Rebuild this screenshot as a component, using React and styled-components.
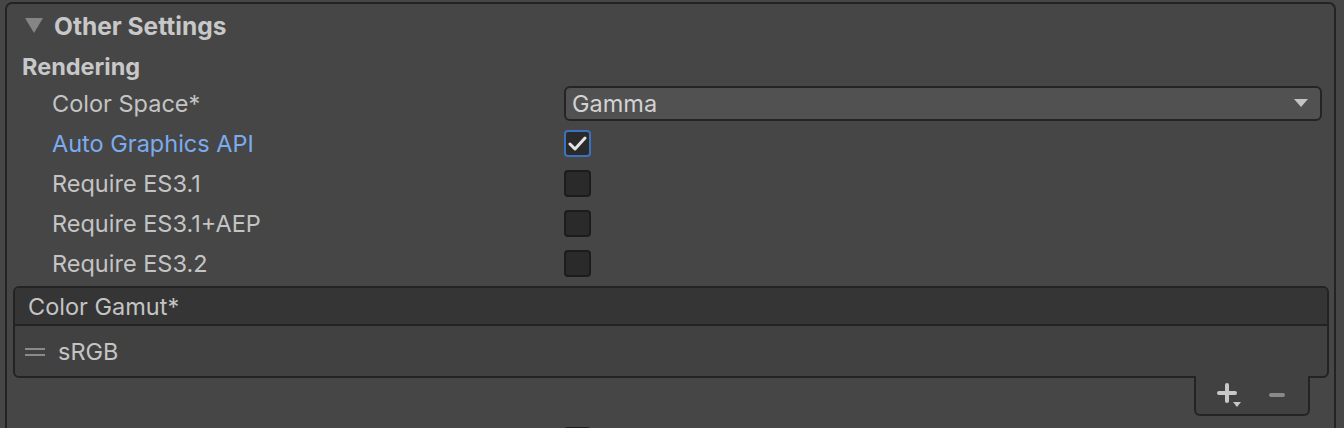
import styled, { createGlobalStyle } from "styled-components";

const GlobalStyle = createGlobalStyle`
  html, body {
    margin: 0;
    padding: 0;
    background: #464646;
    overflow: hidden;
  }
  body {
    font-family: Inter, "Noto Sans", sans-serif;
    color: #c4c4c4;
  }
`;

const Page = styled.div`
  width: 1344px;
  height: 428px;
  padding: 2px 8px 0 5px;
  box-sizing: border-box;
  overflow: hidden;
`;

const Frame = styled.div`
  border: 2px solid #232323;
  border-bottom: none;
  border-radius: 7px 7px 0 0;
  height: 600px;
  box-sizing: border-box;
`;

const FoldoutHeader = styled.div`
  display: flex;
  align-items: center;
  height: 43px;
  padding-left: 18px;
  gap: 11px;
  font-size: 24.5px;
  font-weight: 700;
  color: #c8c8c8;
`;

const SectionTitle = styled.div`
  display: flex;
  align-items: center;
  height: 36px;
  padding: 2px 0 0 15px;
  box-sizing: border-box;
  font-size: 23.5px;
  font-weight: 700;
  color: #c8c8c8;
`;

const Row = styled.div`
  display: flex;
  align-items: center;
  height: 40px;
  padding-right: 12px;
`;

const Label = styled.div`
  width: 557px;
  flex: none;
  padding-left: 45px;
  box-sizing: border-box;
  font-size: 23.5px;
  color: ${(p) => (p.$modified ? "#7cabf0" : "#c4c4c4")};
  white-space: nowrap;
`;

const Control = styled.div`
  flex: 1;
  display: flex;
  align-items: center;
`;

const Dropdown = styled.div`
  flex: 1;
  height: 35px;
  box-sizing: border-box;
  display: flex;
  align-items: center;
  justify-content: space-between;
  padding: 0 12px 0 6px;
  background: #515151;
  border: 2px solid #242424;
  border-radius: 6px;
  font-size: 23.5px;
  color: #d2d2d2;
`;

const Checkbox = styled.div`
  width: 27px;
  height: 27px;
  box-sizing: border-box;
  border-radius: 4px;
  background: #2a2a2a;
  border: 2px solid ${(p) => (p.$checked ? "#3a72c0" : "#1c1c1c")};
  display: flex;
  align-items: center;
  justify-content: center;
`;

const List = styled.div`
  margin: 3px 5px 0 6px;
  display: flex;
  flex-direction: column;
  align-items: flex-end;
`;

const ListBox = styled.div`
  align-self: stretch;
  border: 2px solid #232323;
  border-radius: 6px;
  overflow: hidden;
  background: #414141;
`;

const ListHeader = styled.div`
  height: 36px;
  display: flex;
  align-items: center;
  padding-left: 13px;
  background: #353535;
  border-bottom: 2px solid #232323;
  font-size: 23.5px;
  color: #c4c4c4;
`;

const ListItem = styled.div`
  height: 50px;
  display: flex;
  align-items: center;
  padding-left: 10px;
  gap: 13px;
  font-size: 23.5px;
  color: #c4c4c4;
`;

const Handle = styled.div`
  width: 20px;
  height: 8px;
  border-top: 2px solid #8a8a8a;
  border-bottom: 2px solid #8a8a8a;
  box-sizing: border-box;
  margin-top: 2px;
`;

const Footer = styled.div`
  margin: -2px 19px 0 0;
  width: 116px;
  height: 40px;
  box-sizing: border-box;
  background: #414141;
  border: 2px solid #232323;
  border-top: none;
  border-radius: 0 0 6px 6px;
  display: flex;
  align-items: center;
  padding: 0 23px 0 21px;
  justify-content: space-between;
`;

const BelowRow = styled(Row)`
  margin-top: 4px;
`;

const FoldArrow = () => (
  <svg width="18" height="15" viewBox="0 0 18 15">
    <polygon points="0,0 18,0 9,15" fill="#858585" />
  </svg>
);

const DropArrow = () => (
  <svg width="14" height="8" viewBox="0 0 14 8">
    <polygon points="0,0 14,0 7,8" fill="#c4c4c4" />
  </svg>
);

const Check = () => (
  <svg width="19" height="15" viewBox="0 0 19 15">
    <polyline
      points="2,8 7,13 17,2"
      fill="none"
      stroke="#e4e4e4"
      strokeWidth="3"
      strokeLinecap="round"
      strokeLinejoin="round"
    />
  </svg>
);

const PlusMenu = () => (
  <svg width="28" height="24" viewBox="0 0 28 24">
    <rect x="0" y="8" width="20" height="4" rx="2" fill="#c8c8c8" />
    <rect x="8" y="0" width="4" height="20" rx="2" fill="#c8c8c8" />
    <polygon points="16,19 24,19 20,24" fill="#c8c8c8" />
  </svg>
);

const Minus = () => (
  <svg width="16" height="4" viewBox="0 0 16 4">
    <rect x="0" y="0" width="16" height="4" rx="2" fill="#8a8a8a" />
  </svg>
);

const checkRows = [
  { label: "Auto Graphics API", checked: true, modified: true },
  { label: "Require ES3.1", checked: false },
  { label: "Require ES3.1+AEP", checked: false },
  { label: "Require ES3.2", checked: false },
];

export default function App() {
  return (
    <Page>
      <GlobalStyle />
      <Frame>
        <FoldoutHeader>
          <FoldArrow />
          Other Settings
        </FoldoutHeader>
        <SectionTitle>Rendering</SectionTitle>
        <Row>
          <Label>Color Space*</Label>
          <Control>
            <Dropdown>
              Gamma
              <DropArrow />
            </Dropdown>
          </Control>
        </Row>
        {checkRows.map((r) => (
          <Row key={r.label}>
            <Label $modified={r.modified}>{r.label}</Label>
            <Control>
              <Checkbox $checked={r.checked}>{r.checked && <Check />}</Checkbox>
            </Control>
          </Row>
        ))}
        <List>
          <ListBox>
            <ListHeader>Color Gamut*</ListHeader>
            <ListItem>
              <Handle />
              sRGB
            </ListItem>
          </ListBox>
          <Footer>
            <PlusMenu />
            <Minus />
          </Footer>
        </List>
        <BelowRow>
          <Label />
          <Control>
            <Checkbox />
          </Control>
        </BelowRow>
      </Frame>
    </Page>
  );
}
